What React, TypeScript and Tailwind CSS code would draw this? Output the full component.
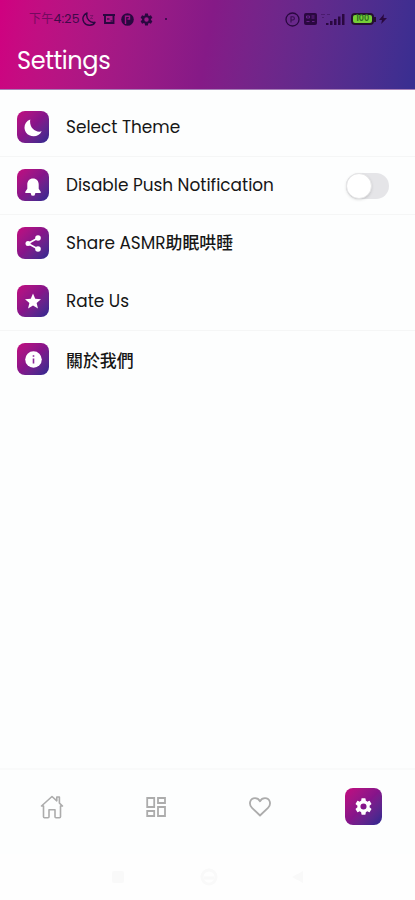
import type { ReactNode } from "react";

const LATIN = "font-['Poppins','Inter','Noto_Sans_CJK_TC',sans-serif]";

const GEAR =
  "M19.14 12.94c.04-.3.06-.61.06-.94 0-.32-.02-.64-.07-.94l2.03-1.58a.49.49 0 0 0 .12-.61l-1.92-3.32a.49.49 0 0 0-.59-.22l-2.39.96c-.5-.38-1.03-.7-1.62-.94l-.36-2.54a.48.48 0 0 0-.48-.41h-3.84c-.24 0-.43.17-.47.41l-.36 2.54c-.59.24-1.13.57-1.62.94l-2.39-.96a.48.48 0 0 0-.59.22L2.74 8.87c-.12.21-.08.47.12.61l2.03 1.58c-.05.3-.09.63-.09.94s.02.64.07.94l-2.03 1.58a.49.49 0 0 0-.12.61l1.92 3.32c.12.22.37.29.59.22l2.39-.96c.5.38 1.03.7 1.62.94l.36 2.54c.05.24.24.41.48.41h3.84c.24 0 .44-.17.47-.41l.36-2.54c.59-.24 1.13-.56 1.62-.94l2.39.96c.22.08.47 0 .59-.22l1.92-3.32a.49.49 0 0 0-.12-.61zM12 15.6A3.6 3.6 0 1 1 12 8.4a3.6 3.6 0 0 1 0 7.2z";

function Tile({ children, className }: { children: ReactNode; className: string }) {
  return (
    <div
      className={`flex shrink-0 items-center justify-center bg-linear-135 from-[#c4057f] via-[#85148a] to-[#2c2590] text-white ${className}`}
    >
      {children}
    </div>
  );
}

function Row({
  icon,
  label,
  border,
  children,
}: {
  icon: ReactNode;
  label: ReactNode;
  border?: boolean;
  children?: ReactNode;
}) {
  return (
    <div className={`flex h-[58px] items-center border-b pr-[26px] pl-[17px] ${border ? "border-[#f5f6f6]" : "border-transparent"}`}>
      <Tile className="-mt-px size-[32px] rounded-[8px]">{icon}</Tile>
      <span className="-mt-px ml-[17px] flex-1 text-[16.9px] leading-6 whitespace-nowrap text-[#161616]">{label}</span>
      {children}
    </div>
  );
}

function StatusBar() {
  return (
    <div className="flex h-[38px] items-center pl-[29px] text-[#2a0840]">
      <span className="w-[52px] text-[12px] leading-4 tracking-[0.2px] whitespace-nowrap">
        <span className="opacity-50">下午</span>
        <span className="text-[12.5px] opacity-85">4:25</span>
      </span>
      <svg className="ml-px size-[14px]" viewBox="0 0 14 14" fill="none" stroke="currentColor" strokeWidth="1.4" strokeLinejoin="round">
        <path d="M5 1C1 2.500-.2 7 2 10.300c2.800 4 9 3.700 11 0C8.500 11.500 3.500 7 5 1Z" />
        <path d="M8 3.500h3L8.500 6.500H11" strokeWidth="1" opacity=".35" />
      </svg>
      <svg className="ml-[7px] size-[12px]" viewBox="0 0 12 12" fill="none" stroke="currentColor" strokeWidth="1.9">
        <path d="M0 2h12M2 2v8h8.500V2" />
        <path d="M4 6h2.500M7.500 8h2" strokeWidth="1.3" opacity=".8" />
      </svg>
      <svg className="ml-[6px] size-[13px]" viewBox="0 0 13 13">
        <circle cx="6.5" cy="6.5" r="6.3" fill="currentColor" />
        <path d="M4.500 11V3.200h4V6H6.500" fill="none" stroke="#a11283" strokeWidth="1.400" />
      </svg>
      <svg className="ml-[6px] size-[13px]" viewBox="1.5 1.5 21 21" fill="currentColor">
        <path d={GEAR} />
      </svg>
      <span className="ml-[12px] size-[2px] rounded-full bg-current" />
      <div className="ml-[118px] flex items-center">
        <svg className="size-[15px]" viewBox="0 0 15 15" fill="none" stroke="currentColor" strokeWidth="1.3">
          <circle cx="7.5" cy="7.5" r="6.5" />
          <path d="M6 10.500V4.800h1.800a1.500 1.500 0 0 1 0 3.200H6" strokeWidth="1.1" opacity=".8" />
        </svg>
        <svg className="ml-[4px] h-[12px] w-[13px]" viewBox="0 0 13 12">
          <rect width="13" height="12" rx="2" fill="currentColor" />
          <path d="M2.5 3h3v2h-3zM7.5 3h3M7.5 5h3M2.5 8.5h3M8 8.5h2.5" stroke="#662189" strokeWidth="1" fill="none" />
        </svg>
        <svg className="ml-[4px] h-[12px] w-[24px]" viewBox="0 0 24 12" fill="currentColor">
          <path d="M5 10h2.500v2H5zM9 8h2.500v4H9zM13 6h2.500v6H13zM17 3.500h2.500V12H17zM21 1h2.500v11H21z" />
          <path d="M0 1h4v1H0zM6 1h3v1H6zM1 4h2v1H1z" opacity=".4" />
        </svg>
        <div className="ml-[6px] flex h-[12px] w-[23px] items-center justify-center rounded-[4px] border-2 border-[#251030] bg-[#76cf38]">
          <span className="text-[8px] leading-[8px] font-semibold text-[#2c6a22]">100</span>
        </div>
        <span className="h-[5px] w-[2px] bg-[#251030]" />
        <svg className="ml-[3px] h-[10px] w-[8px]" viewBox="0 0 8 10" fill="currentColor">
          <path d="M5 0 0 6h3l-.8 4L8 4H4.5Z" />
        </svg>
      </div>
    </div>
  );
}

function NavBar() {
  return (
    <nav className="grid h-[86px] shrink-0 grid-cols-4 items-center border-t-2 border-[#f9fafa] pb-[11px] text-[#acacac]">
      <svg className="mt-px size-[24px] justify-self-center" viewBox="0 0 24 24" fill="none" stroke="currentColor" strokeWidth="1.6" strokeLinejoin="round" strokeLinecap="round">
        <path d="M3.500 11h-2L12 1.500l4.800 4.300V2h2.600v6.100L22.500 11h-2v10.800q0 1-1 1H16q-1 0-1-1v-7H9v7q0 1-1 1H4.500q-1 0-1-1Z" />
      </svg>
      <svg className="h-[20px] w-[20px] justify-self-center" viewBox="0 0 20 20" fill="none" stroke="currentColor" strokeWidth="1.8">
        <path d="M1.200 1h7v9h-7zM12 1h7v5h-7zM1.200 14h7v5h-7zM12 10h7v9h-7z" />
      </svg>
      <svg className="ml-px h-[20px] w-[22px] justify-self-center" viewBox="0 0 22 20" fill="none" stroke="currentColor" strokeWidth="1.8" strokeLinejoin="round">
        <path d="M11 18.500 3 10.800C-.8 7 1.200 1.200 6 1.200c2.300 0 4 1.200 5 3 1-1.800 2.700-3 5-3 4.800 0 6.800 5.800 3 9.600Z" />
      </svg>
      <Tile className="size-[37px] justify-self-center rounded-[8px]">
        <svg className="size-[17px]" viewBox="2 2 20 20" fill="currentColor">
          <path d={GEAR} />
        </svg>
      </Tile>
    </nav>
  );
}

export default function App() {
  return (
    <div className={`flex h-[900px] w-[415px] flex-col overflow-hidden bg-[#fdfefe] ${LATIN}`}>
      <header className="h-[90px] shrink-0 border-b border-[#a780b8] bg-linear-100 from-[#d00080] via-[#851a87] to-[#382e91]">
        <StatusBar />
        <h1 className="pt-[7px] pl-[17px] text-[24px] leading-8 tracking-[-0.4px] text-white">Settings</h1>
      </header>

      <main className="flex-1 pt-[9px]">
        <Row
          border
          label="Select Theme"
          icon={
            <svg className="mt-px size-[18px]" viewBox="0 0 18 18" fill="currentColor">
              <path d="M6.300.6C.5 2.700-1 9 2 13.500c3.800 5.300 12.800 5.200 15.700-1.200C11.500 14.200 4.800 8.500 6.300.6Z" />
            </svg>
          }
        />
        <Row
          border
          label="Disable Push Notification"
          icon={
            <svg className="mt-[3px] h-[18px] w-[16px]" viewBox="0 0 16 18" fill="currentColor">
              <path d="M8 .5c3.600 0 5.700 2.600 5.700 6v4.300l2 3V15H.3v-1.200l2-3V6.500c0-3.400 2.100-6 5.700-6ZM5.500 14.500h5l-.5 1.800a2 1.500 0 0 1-4 0Z" />
            </svg>
          }
        >
          <div className="flex h-[26px] w-[43px] items-center rounded-full bg-[#e5e5e8]">
            <span className="size-[26px] rounded-full border border-[#e5e5e6] bg-white shadow-sm" />
          </div>
        </Row>
        <Row
          label={<>Share ASMR<span className="font-medium">助眠哄睡</span></>}
          icon={
            <svg className="h-[17px] w-[16px]" viewBox="0 0 16 17" fill="currentColor">
              <path d="M13 3 3 8.500l10 5.500" fill="none" stroke="currentColor" strokeWidth="1.700" />
              <circle cx="13" cy="3" r="2.800" />
              <circle cx="3" cy="8.500" r="2.500" />
              <circle cx="13" cy="14" r="2.800" />
            </svg>
          }
        />
        <Row
          border
          label="Rate Us"
          icon={
            <svg className="size-[16px]" viewBox="2 2 20 19" fill="currentColor">
              <path d="m12 17.270 6.180 3.730-1.640-7.030L22 9.240l-7.190-.61L12 2 9.190 8.630 2 9.240l5.460 4.730L5.820 21z" />
            </svg>
          }
        />
        <Row
          label={<span className="block pt-[4px] font-medium">關於我們</span>}
          icon={
            <svg className="size-[17px]" viewBox="0 0 17 17">
              <circle cx="8.500" cy="8.500" r="8.300" fill="white" />
              <path d="M7.700 4.200h1.600v1.600H7.700zM7.700 7.400h1.600v5H7.700z" fill="#8c2799" />
            </svg>
          }
        />
      </main>

      <NavBar />

      <div className="flex h-[46px] shrink-0 items-center bg-[#fefefe] pl-[112px] text-[#f9f9f9]">
        <span className="size-[12px] rounded-[2px] bg-current" />
        <svg className="ml-[76px] size-[18px]" viewBox="0 0 18 18" fill="none" stroke="currentColor" strokeWidth="3">
          <circle cx="9" cy="9" r="7" />
          <path d="M4 10h10" />
        </svg>
        <svg className="ml-[74px] h-[12px] w-[11px]" viewBox="0 0 11 12" fill="currentColor">
          <path d="M11 0v12L0 6z" />
        </svg>
      </div>
    </div>
  );
}
